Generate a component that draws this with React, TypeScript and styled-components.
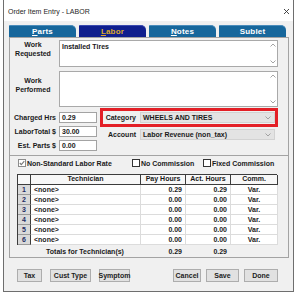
import React from 'react';
import styled, { createGlobalStyle } from 'styled-components';

const GlobalStyle = createGlobalStyle`
  html, body {
    margin: 0;
    padding: 0;
    background: #ffffff;
  }
  body {
    font-family: 'Liberation Sans', Arial, sans-serif;
    font-size: 7px;
    color: #1a1a1a;
  }
  * {
    box-sizing: border-box;
  }
`;

const Window = styled.div`
  margin-left: 3px;
  width: 291px;
  height: 292px;
  border: 1px solid #6e6e6e;
  border-top: none;
  background: #f0f0f0;
  display: flex;
  flex-direction: column;
`;

const TitleBar = styled.div`
  height: 21px;
  background: #ffffff;
  display: flex;
  align-items: center;
  justify-content: space-between;
  padding: 2px 3px 0 4px;
  font-size: 7px;
  color: #262626;
`;

const Body = styled.div`
  flex: 1;
  padding: 4px 4px 0 5px;
  display: flex;
  flex-direction: column;
`;

const TabBar = styled.div`
  display: grid;
  grid-template-columns: repeat(4, 67px);
  column-gap: 3px;
  height: 12px;
`;

const Tab = styled.div<{ $active?: boolean }>`
  background: ${p => (p.$active ? '#0f1f8e' : '#17679c')};
  color: ${p => (p.$active ? '#dcaa2a' : '#ffffff')};
  font-weight: bold;
  font-size: 8px;
  display: flex;
  align-items: center;
  justify-content: center;
  border-top-right-radius: 5px;
  border-top-left-radius: 1px;
  border-top: 1px solid ${p => (p.$active ? '#3a4ab0' : '#4b8cbb')};
  letter-spacing: 0.2px;
`;

const Panel = styled.div`
  width: 280px;
  border: 1px solid #a3a3a3;
  display: flex;
  flex-direction: column;
`;

const UpperSection = styled.div`
  padding: 2px 10px 4px 0;
`;

const TextRows = styled.div`
  display: grid;
  grid-template-columns: 46px 219px;
  column-gap: 3px;
  row-gap: 4px;
`;

const SideLabel = styled.div<{ $pad: number }>`
  font-weight: bold;
  text-align: center;
  line-height: 9px;
  padding-top: ${p => p.$pad}px;
`;

const TextBox = styled.div<{ $h: number }>`
  height: ${p => p.$h}px;
  background: #ffffff;
  border: 1px solid #a9a9a9;
  display: flex;
  font-weight: bold;
`;

const TextBoxContent = styled.div`
  flex: 1;
  padding: 1px 2px;
  line-height: 9px;
`;

const ScrollStrip = styled.div`
  width: 9px;
  display: flex;
  flex-direction: column;
  justify-content: space-between;
  align-items: center;
  padding: 2px 0;
`;

const Fields = styled.div`
  display: flex;
  margin-top: 1px;
`;

const FieldGrid = styled.div`
  display: grid;
  grid-template-columns: 46px 38px;
  grid-auto-rows: 11px;
  column-gap: 3px;
  row-gap: 3px;
  padding-top: 4px;
`;

const FieldLabel = styled.div`
  font-weight: bold;
  text-align: right;
  line-height: 11px;
  white-space: nowrap;
`;

const Input = styled.div`
  background: #ffffff;
  border: 1px solid #a3a3a3;
  font-weight: bold;
  line-height: 9px;
  padding-left: 2px;
`;

const RightColumn = styled.div`
  margin-left: 3px;
  width: 181px;
  display: flex;
  flex-direction: column;
`;

const RedBox = styled.div`
  border: 3px solid #e31f26;
  padding: 1px 0;
  display: flex;
  align-items: center;
`;

const ComboRow = styled.div`
  display: flex;
  align-items: center;
  margin-top: 2px;
  padding: 0 3px;
`;

const ComboLabel = styled.div`
  width: 37px;
  text-align: right;
  padding-right: 4px;
  font-weight: bold;
  white-space: nowrap;
`;

const Combo = styled.div`
  flex: 1;
  height: 11px;
  background: #e3e3e3;
  border: 1px solid #d2d2d2;
  display: flex;
  align-items: center;
  justify-content: space-between;
  padding: 0 3px 0 2px;
  font-weight: bold;
  white-space: nowrap;
`;

const LowerSection = styled.div`
  border-top: 1px solid #a3a3a3;
  padding: 3px 0 0 0;
`;

const CheckRow = styled.div`
  display: grid;
  grid-template-columns: 114px 71px auto;
  height: 8px;
  padding-left: 8px;
`;

const CheckItem = styled.div`
  display: flex;
  align-items: center;
  font-weight: bold;
  white-space: nowrap;
  gap: 1px;
`;

const Box = styled.div<{ $checked?: boolean }>`
  width: 8px;
  height: 8px;
  background: #ffffff;
  border: 1px solid ${p => (p.$checked ? '#8c8c8c' : '#333333')};
  display: flex;
  align-items: center;
  justify-content: center;
`;

const Grid = styled.div`
  margin: 7px 0 0 7px;
  width: 260px;
  display: grid;
  grid-template-columns: 13px 110px 45px 45px 47px;
  grid-auto-rows: 10px;
  background: #ffffff;
  border-left: 1px solid #3c3c3c;
  border-top: 1px solid #3c3c3c;
`;

const HeadCell = styled.div`
  background: #f7f7f7;
  border-right: 1px solid #3c3c3c;
  border-bottom: 1px solid #3c3c3c;
  font-weight: bold;
  text-align: center;
  line-height: 8px;
`;

const NumCell = styled.div`
  background: #d9d9d9;
  border-right: 1px solid #3c3c3c;
  border-bottom: 1px solid #9a9a9a;
  font-weight: bold;
  color: #1e2c63;
  text-align: center;
  line-height: 9px;
`;

const Cell = styled.div<{ $align?: string }>`
  border-right: 1px solid #dcdcdc;
  border-bottom: 1px solid #dcdcdc;
  font-weight: bold;
  line-height: 9px;
  text-align: ${p => p.$align || 'left'};
  padding: 0 3px;
  white-space: nowrap;
`;

const TotalsRow = styled.div`
  margin-left: 7px;
  width: 260px;
  height: 12px;
  display: grid;
  grid-template-columns: 13px 110px 45px 45px 47px;
  align-items: center;
  font-weight: bold;
`;

const TotalsValue = styled.div<{ $align?: string }>`
  text-align: ${p => p.$align || 'right'};
  padding: 0 3px;
  white-space: nowrap;
`;

const ButtonRow = styled.div`
  margin-top: 11px;
  display: flex;
  justify-content: space-between;
  padding: 0 11px 0 8px;
`;

const ButtonGroup = styled.div<{ $gap: number }>`
  display: flex;
  gap: ${p => p.$gap}px;
`;

const Button = styled.div<{ $w: number }>`
  width: ${p => p.$w}px;
  height: 13px;
  background: #e1e1e1;
  border: 1px solid #adadad;
  font-weight: bold;
  display: flex;
  align-items: center;
  justify-content: center;
  color: #222;
`;

const Chevron = ({ up }: { up?: boolean }) => (
  <svg width="6" height="4" viewBox="0 0 6 4">
    <polyline
      points={up ? '0.5,3.5 3,1 5.5,3.5' : '0.5,0.5 3,3 5.5,0.5'}
      fill="none"
      stroke="#9a9a9a"
      strokeWidth="0.9"
    />
  </svg>
);

const Check = () => (
  <svg width="6" height="6" viewBox="0 0 6 6">
    <polyline points="0.8,3 2.3,4.6 5.3,1.2" fill="none" stroke="#7a7a7a" strokeWidth="1.1" />
  </svg>
);

const CloseIcon = () => (
  <svg width="7" height="7" viewBox="0 0 7 7">
    <path d="M1 1 L6 6 M6 1 L1 6" stroke="#333" strokeWidth="0.9" />
  </svg>
);

const rows = [
  { pay: '0.29', act: '0.29' },
  { pay: '0.00', act: '0.00' },
  { pay: '0.00', act: '0.00' },
  { pay: '0.00', act: '0.00' },
  { pay: '0.00', act: '0.00' },
  { pay: '0.00', act: '0.00' },
];

const App: React.FC = () => {
  return (
    <>
      <GlobalStyle />
      <Window>
        <TitleBar>
          <span>Order Item Entry - LABOR</span>
          <CloseIcon />
        </TitleBar>

        <Body>
          <TabBar>
            <Tab><u>P</u>arts</Tab>
            <Tab $active><u>L</u>abor</Tab>
            <Tab><u>N</u>otes</Tab>
            <Tab>Sublet</Tab>
          </TabBar>

          <Panel>
            <UpperSection>
              <TextRows>
                <SideLabel $pad={0}>Work<br />Requested</SideLabel>
                <TextBox $h={27}>
                  <TextBoxContent>Installed Tires</TextBoxContent>
                  <ScrollStrip>
                    <Chevron up />
                    <Chevron />
                  </ScrollStrip>
                </TextBox>

                <SideLabel $pad={5}>Work<br />Performed</SideLabel>
                <TextBox $h={36}>
                  <TextBoxContent />
                  <ScrollStrip>
                    <Chevron up />
                    <Chevron />
                  </ScrollStrip>
                </TextBox>
              </TextRows>

              <Fields>
                <FieldGrid>
                  <FieldLabel>Charged Hrs</FieldLabel>
                  <Input>0.29</Input>
                  <FieldLabel>LaborTotal $</FieldLabel>
                  <Input>30.00</Input>
                  <FieldLabel>Est. Parts $</FieldLabel>
                  <Input>0.00</Input>
                </FieldGrid>

                <RightColumn>
                  <RedBox>
                    <ComboLabel>Category</ComboLabel>
                    <Combo>
                      <span>WHEELS AND TIRES</span>
                      <Chevron />
                    </Combo>
                  </RedBox>
                  <ComboRow>
                    <ComboLabel>Account</ComboLabel>
                    <Combo>
                      <span>Labor Revenue (non_tax)</span>
                      <Chevron />
                    </Combo>
                  </ComboRow>
                </RightColumn>
              </Fields>
            </UpperSection>

            <LowerSection>
              <CheckRow>
                <CheckItem>
                  <Box $checked><Check /></Box>
                  Non-Standard Labor Rate
                </CheckItem>
                <CheckItem>
                  <Box />
                  No Commission
                </CheckItem>
                <CheckItem>
                  <Box />
                  Fixed Commission
                </CheckItem>
              </CheckRow>

              <Grid>
                <HeadCell />
                <HeadCell>Technician</HeadCell>
                <HeadCell>Pay Hours</HeadCell>
                <HeadCell>Act. Hours</HeadCell>
                <HeadCell>Comm.</HeadCell>
                {rows.map((r, i) => (
                  <React.Fragment key={i}>
                    <NumCell>{i + 1}</NumCell>
                    <Cell>&lt;none&gt;</Cell>
                    <Cell $align="right">{r.pay}</Cell>
                    <Cell $align="right">{r.act}</Cell>
                    <Cell $align="center">Var.</Cell>
                  </React.Fragment>
                ))}
              </Grid>

              <TotalsRow>
                <span />
                <TotalsValue $align="center">Totals for Technician(s)</TotalsValue>
                <TotalsValue>0.29</TotalsValue>
                <TotalsValue>0.29</TotalsValue>
                <span />
              </TotalsRow>
            </LowerSection>
          </Panel>

          <ButtonRow>
            <ButtonGroup $gap={8}>
              <Button $w={25}>Tax</Button>
              <Button $w={41}>Cust Type</Button>
              <Button $w={31}>Symptom</Button>
            </ButtonGroup>
            <ButtonGroup $gap={5}>
              <Button $w={28}>Cancel</Button>
              <Button $w={33}>Save</Button>
              <Button $w={34}>Done</Button>
            </ButtonGroup>
          </ButtonRow>
        </Body>
      </Window>
    </>
  );
};

export default App;
